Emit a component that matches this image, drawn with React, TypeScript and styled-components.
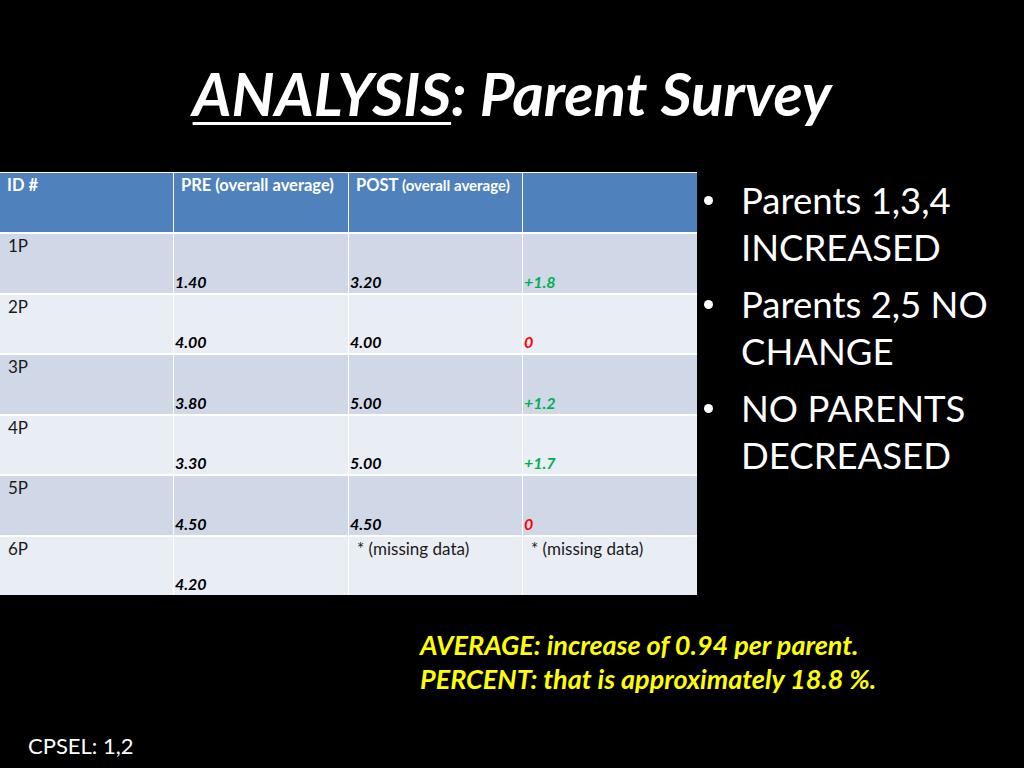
import React from "react";
import styled, { createGlobalStyle } from "styled-components";

const Global = createGlobalStyle`
  html, body { margin: 0; padding: 0; background: #000; }
  #root { width: 1024px; height: 768px; }
`;

const Page = styled.div`
  width: 1024px;
  height: 768px;
  background: #000;
  display: flex;
  flex-direction: column;
  font-family: Lato, "Liberation Sans", sans-serif;
  overflow: hidden;
`;

const TitleBar = styled.div`
  height: 172px;
  display: flex;
  justify-content: center;
  align-items: flex-start;
  box-sizing: border-box;
  padding-top: 59px;
`;

const Title = styled.h1`
  margin: 0;
  color: #fff;
  font-size: 60px;
  line-height: 68px;
  font-weight: 700;
  font-style: italic;
  white-space: nowrap;
  & u {
    text-decoration-thickness: 3px;
    text-underline-offset: 6px;
  }
`;

const Content = styled.div`
  display: flex;
  align-items: flex-start;
`;

const Table = styled.div`
  width: 697px;
  display: grid;
  grid-template-columns: 173px 174px 173px 174px;
  grid-template-rows: 59px repeat(6, 58.5px);
  column-gap: 1px;
  row-gap: 2px;
  background: #fff;
  border-top: 1px solid #fff;
  flex-shrink: 0;
`;

const HeadCell = styled.div`
  background: #4f81bd;
  color: #fff;
  font-size: 16.5px;
  line-height: 19px;
  font-weight: 700;
  padding: 3px 7px;
  white-space: nowrap;
  & small {
    font-size: 15px;
  }
`;

const Cell = styled.div<{ $band: boolean; $bottom?: boolean; $pad?: number }>`
  background: ${(p) => (p.$band ? "#d0d8e8" : "#e9edf4")};
  display: flex;
  align-items: ${(p) => (p.$bottom ? "flex-end" : "flex-start")};
  padding: 2px ${(p) => p.$pad ?? 8}px 1px;
  font-size: 17px;
  line-height: 20px;
  color: #1a1a1a;
  white-space: nowrap;
`;

const Value = styled.span<{ $color?: string }>`
  font-size: 16px;
  font-weight: 700;
  font-style: italic;
  color: ${(p) => p.$color ?? "#000"};
`;

const Bullets = styled.ul`
  list-style: none;
  margin: 0;
  padding: 5px 0 0 7px;
  color: #fff;
  font-size: 36.5px;
  line-height: 47px;
`;

const Bullet = styled.li`
  position: relative;
  padding-left: 37px;
  margin-bottom: 10px;
  white-space: nowrap;
  &::before {
    content: "";
    position: absolute;
    left: 0;
    top: 19px;
    width: 9px;
    height: 9px;
    border-radius: 50%;
    background: #fff;
  }
`;

const Summary = styled.div`
  margin: 33px 0 0 420px;
  color: #ffff00;
  font-size: 27px;
  line-height: 34px;
  font-weight: 700;
  font-style: italic;
  white-space: nowrap;
`;

const Footer = styled.div`
  margin: auto 0 0 28px;
  padding-bottom: 9px;
  color: #fff;
  font-size: 22px;
  line-height: 26px;
`;

type Row = {
  id: string;
  pre: string;
  post?: string;
  diff?: string;
  color?: string;
};

const rows: Row[] = [
  { id: "1P", pre: "1.40", post: "3.20", diff: "+1.8", color: "#00b050" },
  { id: "2P", pre: "4.00", post: "4.00", diff: "0", color: "#ff0000" },
  { id: "3P", pre: "3.80", post: "5.00", diff: "+1.2", color: "#00b050" },
  { id: "4P", pre: "3.30", post: "5.00", diff: "+1.7", color: "#00b050" },
  { id: "5P", pre: "4.50", post: "4.50", diff: "0", color: "#ff0000" },
  { id: "6P", pre: "4.20" },
];

export default function App() {
  return (
    <Page>
      <Global />
      <TitleBar>
        <Title>
          <u>ANALYSIS</u>: Parent Survey
        </Title>
      </TitleBar>
      <Content>
        <Table>
          <HeadCell>ID #</HeadCell>
          <HeadCell>PRE (overall average)</HeadCell>
          <HeadCell>
            POST <small>(overall average)</small>
          </HeadCell>
          <HeadCell />
          {rows.map((r, i) => {
            const band = i % 2 === 0;
            return (
              <React.Fragment key={r.id}>
                <Cell $band={band}>{r.id}</Cell>
                <Cell $band={band} $bottom $pad={1}>
                  <Value>{r.pre}</Value>
                </Cell>
                {r.post ? (
                  <Cell $band={band} $bottom $pad={1}>
                    <Value>{r.post}</Value>
                  </Cell>
                ) : (
                  <Cell $band={band}>* (missing data)</Cell>
                )}
                {r.diff ? (
                  <Cell $band={band} $bottom $pad={1}>
                    <Value $color={r.color}>{r.diff}</Value>
                  </Cell>
                ) : (
                  <Cell $band={band}>* (missing data)</Cell>
                )}
              </React.Fragment>
            );
          })}
        </Table>
        <Bullets>
          <Bullet>
            Parents 1,3,4
            <br />
            INCREASED
          </Bullet>
          <Bullet>
            Parents 2,5 NO
            <br />
            CHANGE
          </Bullet>
          <Bullet>
            NO PARENTS
            <br />
            DECREASED
          </Bullet>
        </Bullets>
      </Content>
      <Summary>
        AVERAGE: increase of 0.94 per parent.
        <br />
        PERCENT: that is approximately 18.8 %.
      </Summary>
      <Footer>CPSEL: 1,2</Footer>
    </Page>
  );
}
